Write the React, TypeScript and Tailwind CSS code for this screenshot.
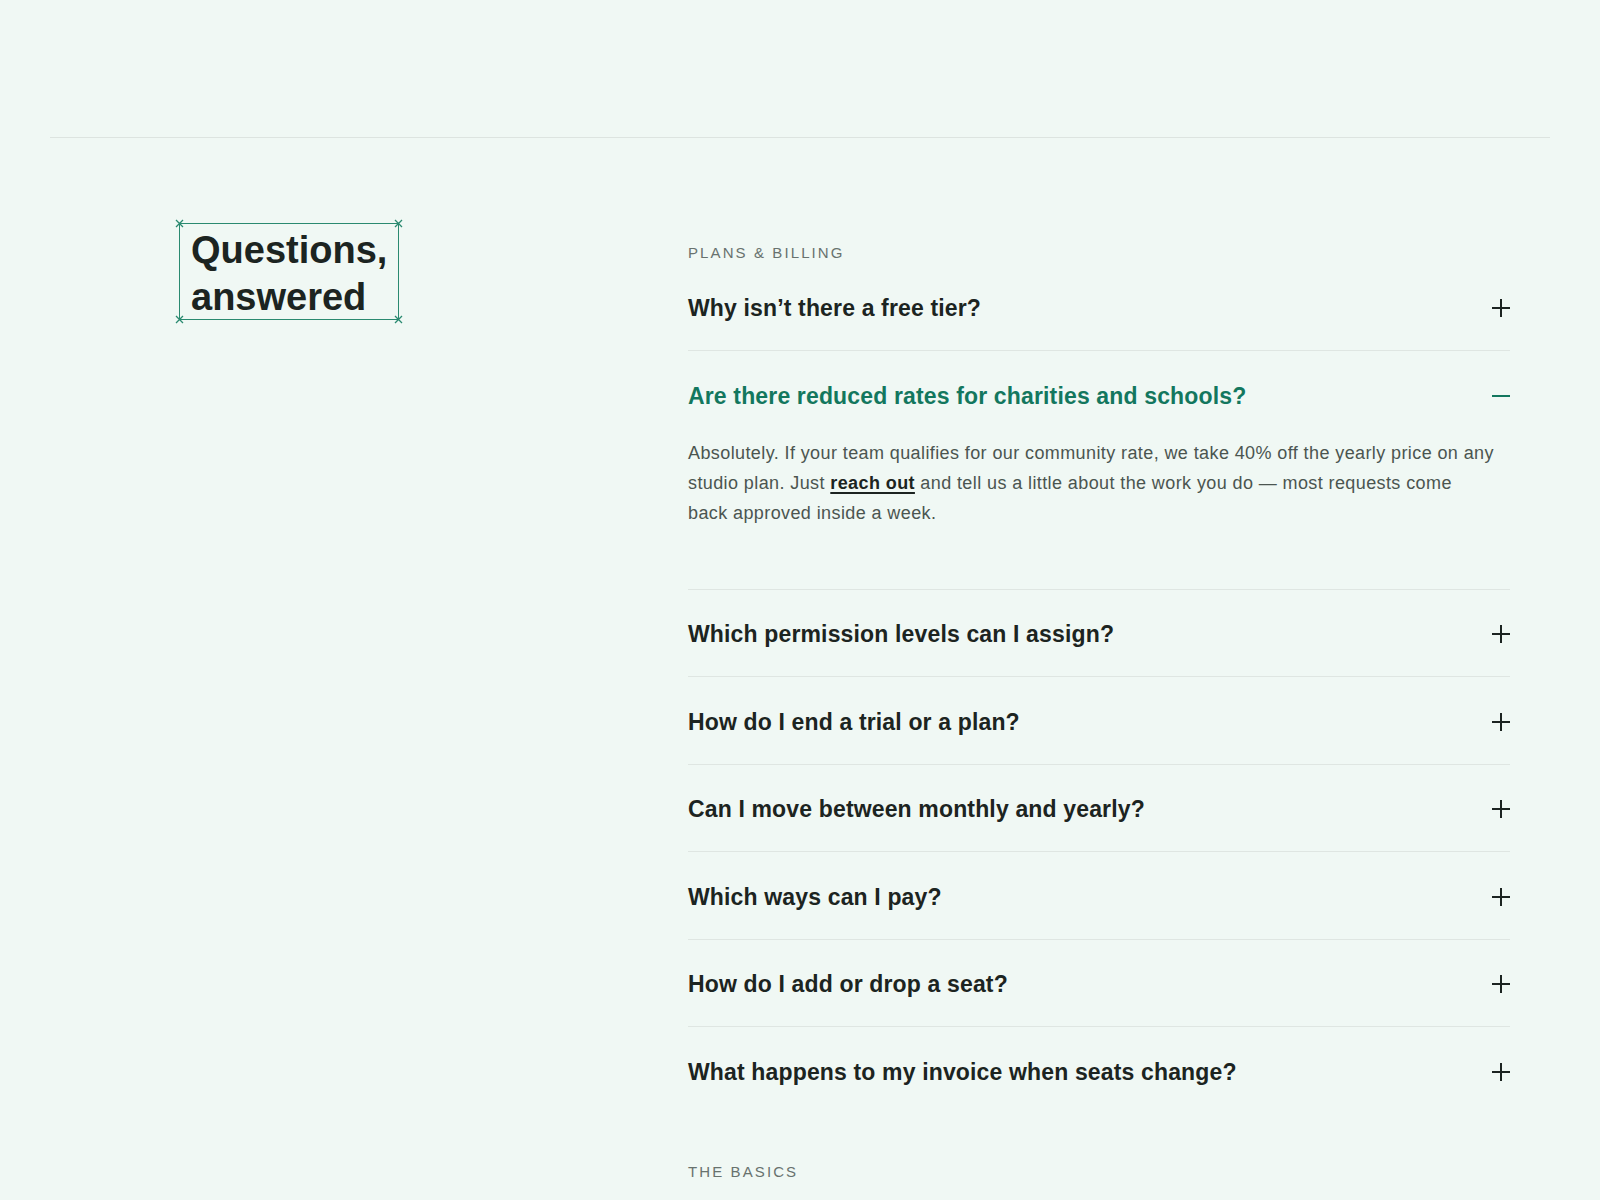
import React, { useState } from "react";

type Item = { q: string; a?: React.ReactNode };

const billing: Item[] = [
  { q: "Why isn’t there a free tier?" },
  {
    q: "Are there reduced rates for charities and schools?",
    a: (
      <>
        Absolutely. If your team qualifies for our community rate, we take 40% off the yearly price on any studio plan. Just{" "}
        <a href="#" className="font-bold text-[#1c2421] underline decoration-[1.5px] underline-offset-[3px]">
          reach out
        </a>{" "}
        and tell us a little about the work you do — most requests come back approved inside a week.
      </>
    ),
  },
  { q: "Which permission levels can I assign?" },
  { q: "How do I end a trial or a plan?" },
  { q: "Can I move between monthly and yearly?" },
  { q: "Which ways can I pay?" },
  { q: "How do I add or drop a seat?" },
  { q: "What happens to my invoice when seats change?" },
];

const basics: Item[] = [
  { q: "What exactly is a studio?" },
  { q: "Can I invite people outside my company?" },
  { q: "Where is my data stored?" },
];

function PlusIcon() {
  return (
    <svg width="18" height="18" viewBox="0 0 18 18" className="shrink-0" aria-hidden="true">
      <path d="M9 0V18M0 9H18" stroke="#1c2421" strokeWidth="2" />
    </svg>
  );
}

function MinusIcon() {
  return (
    <svg width="18" height="18" viewBox="0 0 18 18" className="shrink-0" aria-hidden="true">
      <path d="M0 9H18" stroke="#13775e" strokeWidth="2" />
    </svg>
  );
}

function Marker({ pos }: { pos: string }) {
  return (
    <svg viewBox="0 0 9 9" className={`absolute w-[9px] h-[9px] ${pos}`} aria-hidden="true">
      <path d="M1 1L8 8M8 1L1 8" stroke="#2a8a70" strokeWidth="1.3" />
    </svg>
  );
}

function Section({
  title,
  items,
  openIndex,
  onToggle,
  className,
}: {
  title: string;
  items: Item[];
  openIndex: number | null;
  onToggle: (i: number) => void;
  className?: string;
}) {
  return (
    <div className={className}>
      <div className="mt-[3px] mb-[2.5px] text-[15px] leading-[16px] tracking-[0.14em] text-[#68726e] uppercase">
        {title}
      </div>
      <div className="divide-y divide-[#dfe6e2]">
        {items.map((it, i) => {
          const open = openIndex === i;
          return (
            <div key={it.q}>
              <button
                type="button"
                onClick={() => onToggle(i)}
                className="w-full flex items-center justify-between text-left pt-[28.5px] pb-[26px] cursor-pointer"
              >
                <span
                  className={`text-[23px] leading-[32px] tracking-[0.15px] font-bold ${open ? "text-[#13775e]" : "text-[#1c2421]"}`}
                >
                  {it.q}
                </span>
                {open ? <MinusIcon /> : <PlusIcon />}
              </button>
              {open && (
                <div className="pt-[0.5px] pb-[60.5px] text-[18px] leading-[30px] tracking-[0.4px] text-[#4b5550] pr-[15px]">
                  {it.a ?? "Get in touch and we’ll walk you through it."}
                </div>
              )}
            </div>
          );
        })}
      </div>
    </div>
  );
}

export default function App() {
  const [openBilling, setOpenBilling] = useState<number | null>(1);
  const [openBasics, setOpenBasics] = useState<number | null>(null);

  return (
    <div className="min-h-screen bg-[#f0f8f4] font-['Liberation_Sans',Arial,sans-serif]">
      <div className="mx-[50px] pt-[137px]">
        <div className="border-t border-[#dde4e0]" />
        <div className="flex pt-[84px] pl-[129px] pr-[40px] pb-[80px]">
          <div className="w-[509px] shrink-0">
            <div className="relative inline-block mt-[1px] border border-[#2a8a70] px-[11px] pt-[3px]">
              <h2 className="-mb-[2px] text-[38px] leading-[47px] font-bold text-[#1c2421]">
                Questions,
                <br />
                answered
              </h2>
              <Marker pos="-left-[5px] -top-[5px]" />
              <Marker pos="-right-[5px] -top-[5px]" />
              <Marker pos="-left-[5px] -bottom-[5px]" />
              <Marker pos="-right-[5px] -bottom-[5px]" />
            </div>
          </div>
          <div className="flex-1 pt-[20px]">
            <Section
              title="Plans & Billing"
              items={billing}
              openIndex={openBilling}
              onToggle={(i) => setOpenBilling(openBilling === i ? null : i)}
            />
            <Section
              title="The Basics"
              items={basics}
              openIndex={openBasics}
              onToggle={(i) => setOpenBasics(openBasics === i ? null : i)}
              className="mt-[50px]"
            />
          </div>
        </div>
      </div>
    </div>
  );
}
